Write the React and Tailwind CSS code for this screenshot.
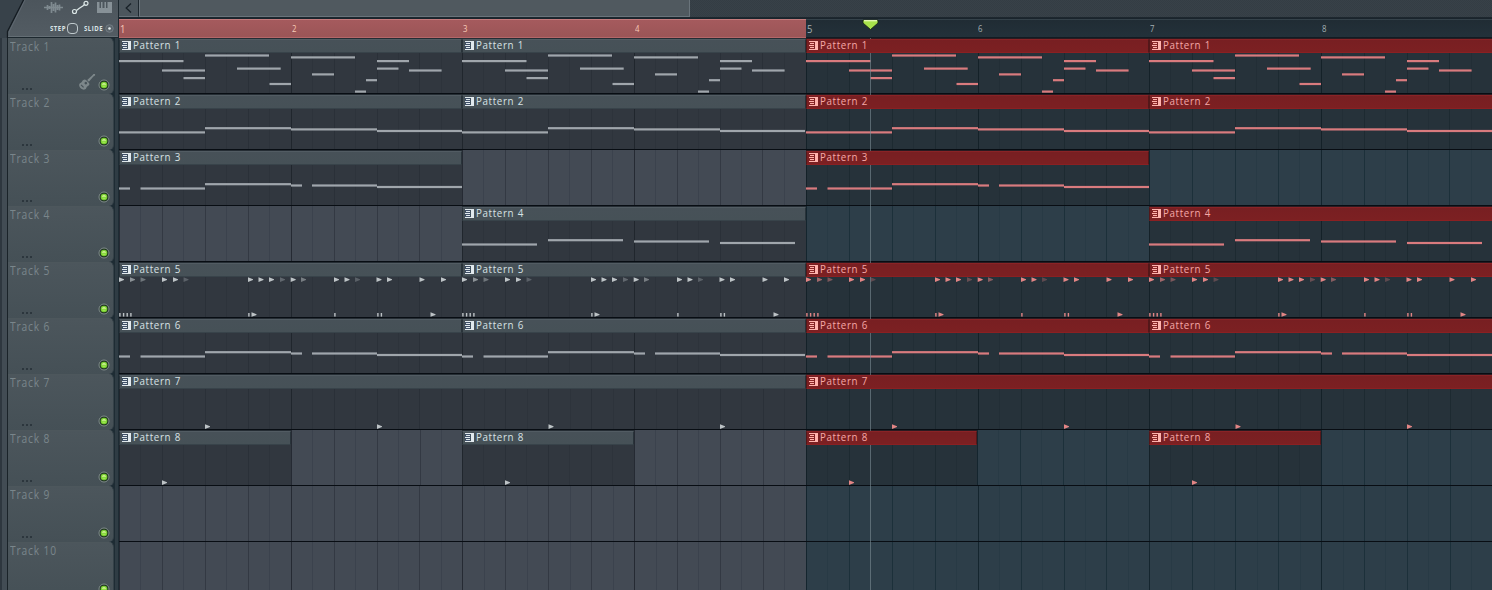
import React from "react";

const BAR = 171.7;

const line = (x, w, y) => ({ x, w, y });
const phrase = [
  line(0, 11, 38.3), line(21.5, 64.5, 38.3), line(86, 86, 34),
  line(172, 11, 35.3), line(193, 65, 35.3), line(258, 85, 36.8),
];

const PATTERNS = {
  1: {
    lines: [
      line(0, 64.5, 22.9), line(43, 43, 32.3), line(64.5, 21.5, 39.9), line(86, 64, 17.3),
      line(118, 43.7, 30.4), line(150.5, 21.5, 45.8), line(172, 64, 19.2), line(193, 22, 36.2),
      line(236, 11, 53.4), line(247, 11, 42), line(258, 32, 22.9), line(258, 21.5, 30.4),
      line(290, 32.6, 32.3),
    ],
  },
  2: { lines: [line(0, 86, 38.2), line(86, 86, 34), line(172, 86, 35.2), line(258, 85, 36.8)] },
  3: { lines: phrase },
  4: { lines: [line(0, 75, 38.3), line(86, 75, 34), line(172, 75, 35.3), line(258, 75, 36.8)] },
  5: {
    hits: [
      [0, 1], [11, 0.65], [21.5, 0.45], [43, 1], [54, 1], [64.5, 0.3], [129, 1], [139.5, 1],
      [150, 1], [161, 0.35], [171.7, 1], [182, 0.5], [215, 1], [225.5, 1], [236, 0.3],
      [257.5, 1], [268, 1], [300.5, 1], [322, 1],
    ].map(([x, o]) => [x, 17.5, o]).concat([[132.5, 52.4, 1], [311.5, 52.4, 1]]),
    ticks: [0, 3.7, 7.3, 11, 129, 215, 258, 261.5],
  },
  6: { lines: phrase },
  7: { hits: [[86, 52.5, 1], [258, 52.5, 1], [429.5, 52.5, 1], [601, 52.5, 1]] },
  8: { hits: [[43, 52.5, 1]] },
};

// Each lane is a list of [pattern or 0 for empty, length in bars]
const LANES = [
  [[1, 2], [1, 2], [1, 2], [1, 2]],
  [[2, 2], [2, 2], [2, 2], [2, 2]],
  [[3, 2], [0, 2], [3, 2], [0, 2]],
  [[0, 2], [4, 2], [0, 2], [4, 2]],
  [[5, 2], [5, 2], [5, 2], [5, 2]],
  [[6, 2], [6, 2], [6, 2], [6, 2]],
  [[7, 4], [7, 4]],
  [[8, 1], [0, 1], [8, 1], [0, 1], [8, 1], [0, 1], [8, 1], [0, 1]],
  [[0, 4], [0, 4]],
  [[0, 4], [0, 4]],
];

function GridLines({ bars, red, body }) {
  const weights = red ? ["#14252e", "#1c303a", "#283a45"] : ["#252a33", "#333943", "#3b424d"];
  const dark = red ? ["#142128", "#1d2a31", "#222e36"] : ["#20262d", "#2a3038", "#2d333b"];
  const tones = body ? dark : weights;
  return (
    <svg className="absolute inset-0 h-full w-full" shapeRendering="crispEdges">
      {Array.from({ length: bars * 8 }, (_, i) => (
        <rect key={i} x={(i * BAR) / 8} y="0" width="1" height="56"
          fill={i % 8 === 0 ? tones[0] : i % 2 === 0 ? tones[1] : tones[2]} />
      ))}
    </svg>
  );
}

function Notes({ pattern, red }) {
  const { lines = [], hits = [], ticks = [] } = PATTERNS[pattern];
  const fill = red ? "#d97b7e" : "#a0a6ac";
  const hitFill = red ? "#e38585" : "#bdc3c6";
  return (
    <svg className="absolute inset-0 h-full w-full">
      {lines.map((n, i) => (
        <rect key={i} x={n.x} y={n.y - 0.9} width={n.w} height="2.2" fill={fill} />
      ))}
      {hits.map(([x, y, o], i) => (
        <path key={i} d={`M${x} ${y - 2.2}l5 2v.8l-5 1.800z`} fill={hitFill} opacity={o} />
      ))}
      {ticks.map((x) => (
        <rect key={x} x={x + 0.2} y="51" width="1.4" height="3.6" fill={hitFill} />
      ))}
    </svg>
  );
}

function ClipIcon({ red }) {
  return (
    <svg width="9" height="9" viewBox="0 0 9 9" className="shrink-0" shapeRendering="crispEdges">
      <path d="M0 0h9v9H0z" fill={red ? "#ffb3ad" : "#e1e9ed"} />
      <path d="M0 1h5v1H0zM0 3h5v1H0zM0 5h5v1H0zM0 7h5v1H0z" fill={red ? "#8e2929" : "#3f5068"} />
      <path d="M0 2h1v1H0zM0 6h1v1H0zM5 1h1v7H5z" fill={red ? "#7c1f22" : "#40505e"} />
    </svg>
  );
}

function Clip({ pattern, bars, red }) {
  return (
    <div
      className={`relative h-[55px] shrink-0 overflow-hidden border-t ${
        red ? "border-[#2b1a20] bg-[#26323a]" : "border-[#252d34] bg-[#31373f]"
      }`}
      style={{ width: bars * BAR }}
    >
      <div className="absolute inset-x-0 -top-px h-[55px]">
        <GridLines bars={bars} red={red} body />
        <Notes pattern={pattern} red={red} />
      </div>
      <div
        className={`relative z-20 flex h-[14px] items-center gap-[3px] rounded-[1px] border pb-[2px] pl-[2px] ${
          red
            ? "border-t-[#8a2326] border-r-[#531719] border-b-[#8b2022] border-l-[#531719] bg-linear-to-b from-[#781f22] to-[#7c2022] text-[#f5a8a7]"
            : "border-t-[#525c63] border-r-[#29333a] border-b-[#38434a] border-l-[#29333a] bg-linear-to-b from-[#475158] to-[#465157] text-[#d8e2e5]"
        }`}
      >
        <ClipIcon red={red} />
        <span className="-ml-px origin-left scale-x-[0.85] text-[11.5px] leading-[12px] font-medium tracking-[0.75px] whitespace-nowrap [word-spacing:0.5px]">
          Pattern {pattern}
        </span>
      </div>
    </div>
  );
}

function Lane({ items }) {
  const starts = items.map((_, i) => items.slice(0, i).reduce((s, [, b]) => s + b, 0));
  return (
    <div className="flex h-14 w-full shrink-0 overflow-hidden border-b border-[#080d13] bg-[#080d13]">
      {items.map(([pattern, bars], i) => {
        const red = starts[i] >= 4;
        return pattern ? (
          <Clip key={i} pattern={pattern} bars={bars} red={red} />
        ) : (
          <div key={i} className={`relative h-[55px] shrink-0 ${red ? "bg-[#2d3e49]" : "bg-[#434a54]"}`}
            style={{ width: bars * BAR }}>
            <GridLines bars={bars} red={red} />
          </div>
        );
      })}
    </div>
  );
}

function Led() {
  return (
    <svg width="12" height="12" viewBox="0 0 12 12">
      <circle cx="6" cy="6" r="5" fill="#1f3420" stroke="#818c8c" />
      <circle cx="6" cy="6" r="3.3" fill="#79cf32" />
      <path d="M3.7 5.7a2.4 2.4 0 0 1 4.6 0z" fill="#d5f59a" />
      <path d="M3.7 6.5h4.6L7.2 8H4.8z" fill="#9ee84f" />
    </svg>
  );
}

function Guitar() {
  return (
    <svg width="18" height="18" viewBox="0 0 18 18" fill="#7d878a">
      <path d="M9.2 7 14.4 2.2 15.4.9 17.2 1 16.8 2.7 15.4 3.5 10.9 8.700z" />
      <path fillRule="evenodd" d="M4.2 8.2C5 6.6 6.9 5.8 8 7l3 3c1 1.1.2 2.6-1.3 3.2-.9.4-1 .9-1.5 2-.9 1.9-3.6 1.8-5.3.3C1 13.700.5 11 2.3 10c1-.5 1.500-1 1.900-1.800zM7.800 8.800a1.300 1.300 0 1 0 .01 0zM3.500 11.500l-.8.8 2.500 2.500.8-.8z" />
    </svg>
  );
}

function Track({ n }) {
  return (
    <div className="flex h-14 shrink-0 bg-[#1e2c34]">
      <div className="flex w-[106px] flex-col justify-between rounded-r-[5px] border-t border-t-[#4d575c] border-r border-r-[#354148] bg-linear-to-b from-[#4c565c] to-[#455056] pl-[2px]">
        <span className="w-max origin-left scale-x-[0.76] text-[13.5px] leading-[14px] tracking-[1.1px] text-[#7a868b]">
          Track {n}
        </span>
        <div className="flex items-end pr-[3px] pb-[3px]">
          <svg width="12" height="3" viewBox="0 0 12 3" className="ml-[12px]" fill="#2c363d" shapeRendering="crispEdges">
            <path d="M0 0h2v2H0zM4 0h2v2H4zM8 0h2v2H8z" />
          </svg>
          <span className="flex-1" />
          {n === 1 && <span className="-mt-[6px] mr-[2px] mb-0"><Guitar /></span>}
          <Led />
        </div>
      </div>
      <div className="ml-px w-[3px] bg-[#2f3c44]" />
    </div>
  );
}

function ToolTab() {
  return (
    <div className="relative h-[38px] w-[119px] shrink-0">
      <svg width="119" height="38" className="absolute inset-0">
        <defs>
          <linearGradient id="tab" x1="0" y1="0" x2="0" y2="1">
            <stop offset="0" stopColor="#4c555c" />
            <stop offset="1" stopColor="#535c63" />
          </linearGradient>
        </defs>
        <path d="M0 0h119v38H0z" fill="#38424a" />
        <path d="M8 38V31L24 0h94v37H8z" fill="url(#tab)" />
        <path d="M7.500 38V31.500L24 -1" fill="none" stroke="#151c22" strokeWidth="1.300" />
        <path d="M9 36V32L25 0" fill="none" stroke="#667078" strokeWidth=".7" />
        <path d="M8 36.500h110" stroke="#69737a" strokeWidth=".8" />
        <path d="M8 37.500h111M118.500 0v38" stroke="#1d282f" />
        <path d="M44 7.500h19M47.500 5v5M49.500 6v3M51.500 2v11M53.500 4v7M55.500 2.500v10M57.500 5v5M59.500 4.500v6" stroke="#7f8a90" strokeWidth="1.700" fill="none" />
        <path d="M76.500 10.500l2.500-2 4.500-3 1.500-1.500" stroke="#dae5e5" strokeWidth="1.300" fill="none" />
        <circle cx="74.500" cy="11.500" r="2" fill="none" stroke="#dae5e5" strokeWidth="1.200" />
        <circle cx="86" cy="3.300" r="2" fill="none" stroke="#dae5e5" strokeWidth="1.200" />
        <path d="M97 2h2.500v6H101V2h1.500v6h2V2h1.500v6h1.500V2H112v11H97z" fill="#879197" />
      </svg>
      <div className="relative flex h-full items-end justify-end pr-[5px] pb-[4px] text-[7px] leading-[11px] font-bold text-[#dbe4e6]">
        <span className="w-[17px] origin-left scale-x-[0.86] tracking-[0.6px]">STEP</span>
        <span className="mr-[6px] h-[11px] w-[11px] rounded-[4px] border border-[#c0cacd]" />
        <span className="w-[21px] origin-left scale-x-[0.86] tracking-[0.6px]">SLIDE</span>
        <svg width="9" height="11" viewBox="0 0 9 11">
          <circle cx="4.500" cy="5.500" r="3.800" fill="#5a646b" stroke="#78838a" strokeWidth=".8" />
          <circle cx="4.500" cy="5.500" r="1.300" fill="#e5edef" />
        </svg>
      </div>
    </div>
  );
}

function Ruler() {
  return (
    <div className="flex h-[20px] shrink-0 border-t border-[#1a242c] bg-[#212e36]">
      {[1, 2, 3, 4, 5, 6, 7, 8].map((n) => {
        const selected = n < 5;
        return (
          <div key={n} style={{ width: BAR }}
            className={`flex shrink-0 items-center border-t border-b pl-[1px] ${
              selected
                ? "border-t-[#c47b7c] border-b-[#b46769] bg-linear-to-b from-[#a55a5d] to-[#9b5557] text-[#f8cbb8]"
                : "border-t-[#35424a] border-b-[#121c23] bg-linear-to-b from-[#202c34] to-[#23313a] text-[#a4afb4]"
            }`}>
            <span className={`origin-left scale-x-[0.82] leading-none font-medium ${n % 4 === 1 ? "text-[11.5px]" : "pt-px text-[9.5px]"}`}>{n}</span>
          </div>
        );
      })}
    </div>
  );
}

export default function App() {
  return (
    <div className="flex h-[590px] w-[1492px] overflow-hidden bg-[#3b454d] font-['Open_Sans',sans-serif]">
      <div className="flex w-[119px] shrink-0 flex-col">
        <ToolTab />
        <div className="flex min-h-0 flex-1 overflow-hidden">
          <div className="w-[8px] shrink-0 border-r border-l-2 border-r-[#1a2329] border-l-[#2e373f] bg-[#424c54]" />
          <div className="flex min-w-0 flex-1 flex-col">
            {LANES.map((_, i) => <Track key={i} n={i + 1} />)}
          </div>
        </div>
      </div>
      <div className="relative flex min-w-0 flex-1 flex-col overflow-hidden">
        <div className="flex h-[18px] shrink-0 border-b border-[#1d272e] bg-[#363f46] bg-[repeating-conic-gradient(#343d44_0%_25%,#384148_0%_50%)] bg-size-[2px_2px]">
          <div className="flex w-[20px] items-center justify-center border-r border-b border-r-[#1e282f] border-b-[#68727a] bg-[#4c565d]">
            <svg width="7" height="10" viewBox="0 0 7 10" fill="none" stroke="#182128" strokeWidth="1.300">
              <path d="M6 .5 1.200 5 6 9.500" />
            </svg>
          </div>
          <div className="w-[551px] border-r border-b border-l border-[#6a747b] bg-[#50595f]" />
        </div>
        <Ruler />
        <div className="relative flex min-h-0 flex-1 flex-col overflow-hidden">
          {LANES.map((items, i) => <Lane key={i} items={items} />)}
          <div className="absolute top-0 left-[751px] z-10 h-full w-px bg-[#7f9098]/60" />
        </div>
        <svg width="17" height="11" viewBox="0 0 17 11" className="absolute top-[19px] left-[743px]">
          <path d="M1 1h15v3L8.500 10.500 1 4z" fill="#a8e24b" stroke="#16250f" strokeWidth=".8" />
          <path d="M2 1.700h13" stroke="#efffbe" strokeWidth="1.200" />
        </svg>
      </div>
    </div>
  );
}
